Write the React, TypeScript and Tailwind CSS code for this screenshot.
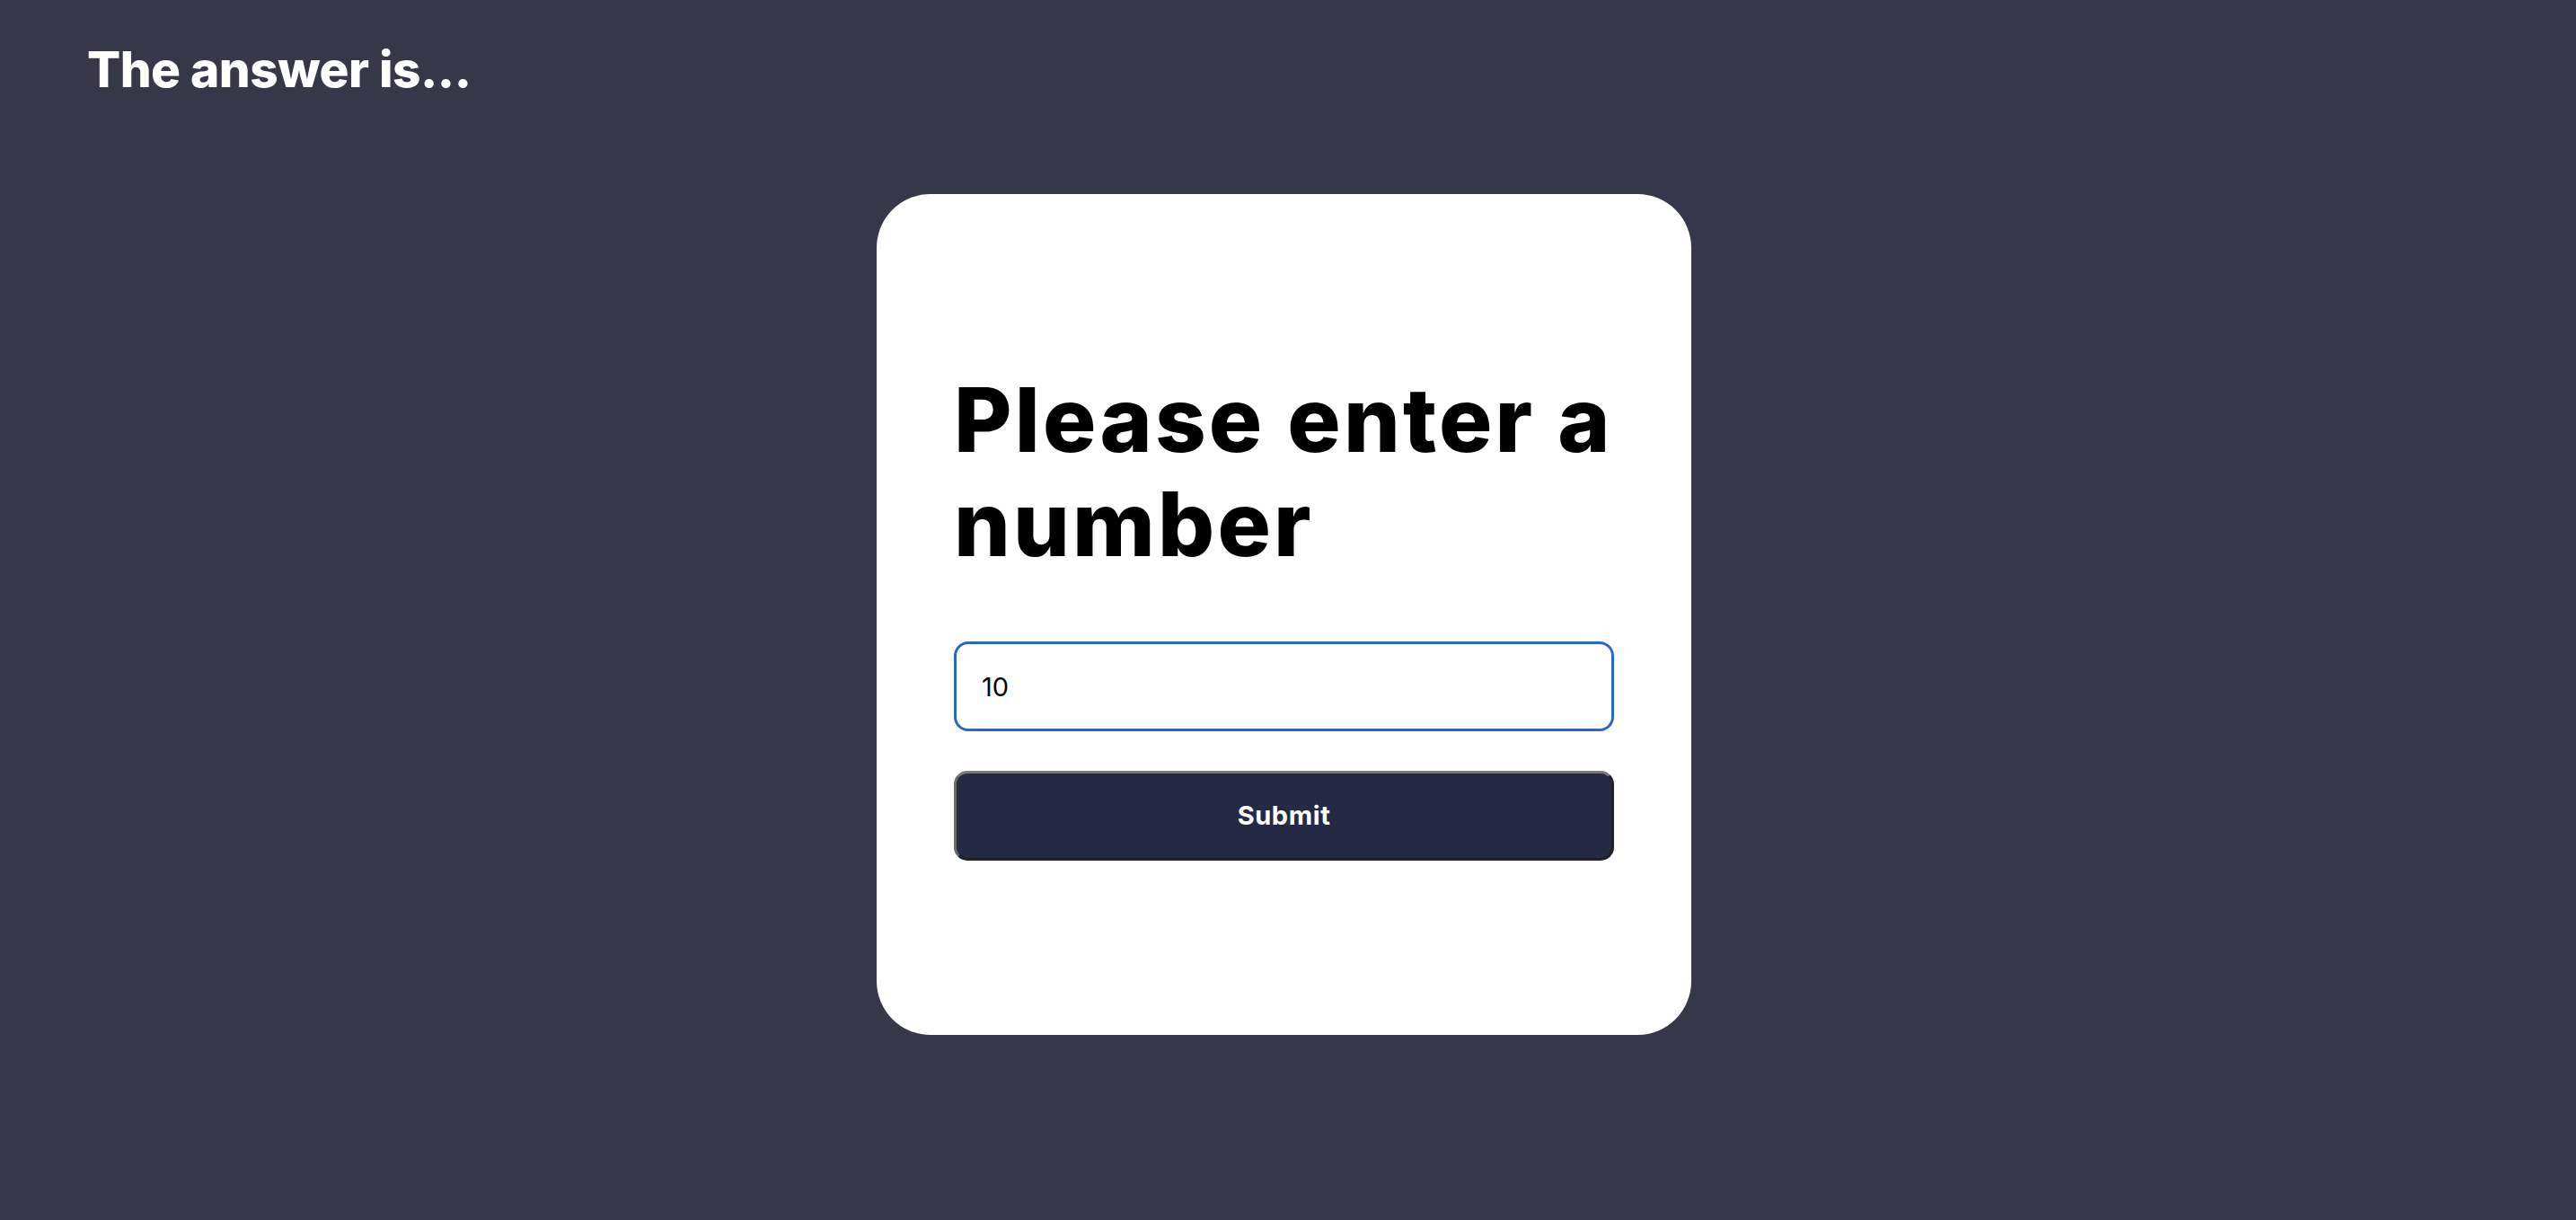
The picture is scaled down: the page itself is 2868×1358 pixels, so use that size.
import { useState } from "react";

export default function App() {
    const [value, setValue] = useState("10");

    return (
        <div className="min-h-screen w-full bg-[#37374a] font-['Inter',sans-serif]">
            <header className="pt-[50px] pl-[97px]">
                <h2 className="text-[55px] leading-none font-extrabold text-white tracking-[-0.01em]">
                    The answer is...
                </h2>
            </header>

            <main className="flex justify-center pr-[9px] mt-[111px]">
                <div className="w-[907px] h-[936px] bg-white rounded-[60px] px-[86px] pt-[193px]">
                    <h1 className="text-[99px] leading-[116px] font-extrabold text-black tracking-[0.032em]">
                        Please enter a
                        <br />
                        number
                    </h1>

                    <form
                        className="mt-[73px] flex flex-col gap-[44px]"
                        onSubmit={(e) => e.preventDefault()}
                    >
                        <input
                            type="text"
                            value={value}
                            autoFocus
                            onChange={(e) => setValue(e.target.value)}
                            className="h-[100px] w-full rounded-[16px] border-[3px] border-[#2a66cc] px-[28px] text-[29px] text-black outline-none caret-black"
                        />
                        <button
                            type="submit"
                            className="h-[100px] w-full rounded-[15px] bg-[#252a44] border-[3px] border-t-[#7a7a7a] border-l-[#6a6a6a] border-b-[#222222] border-r-[#222222] text-white text-[29px] font-bold tracking-[0.02em]"
                        >
                            Submit
                        </button>
                    </form>
                </div>
            </main>
        </div>
    );
}
